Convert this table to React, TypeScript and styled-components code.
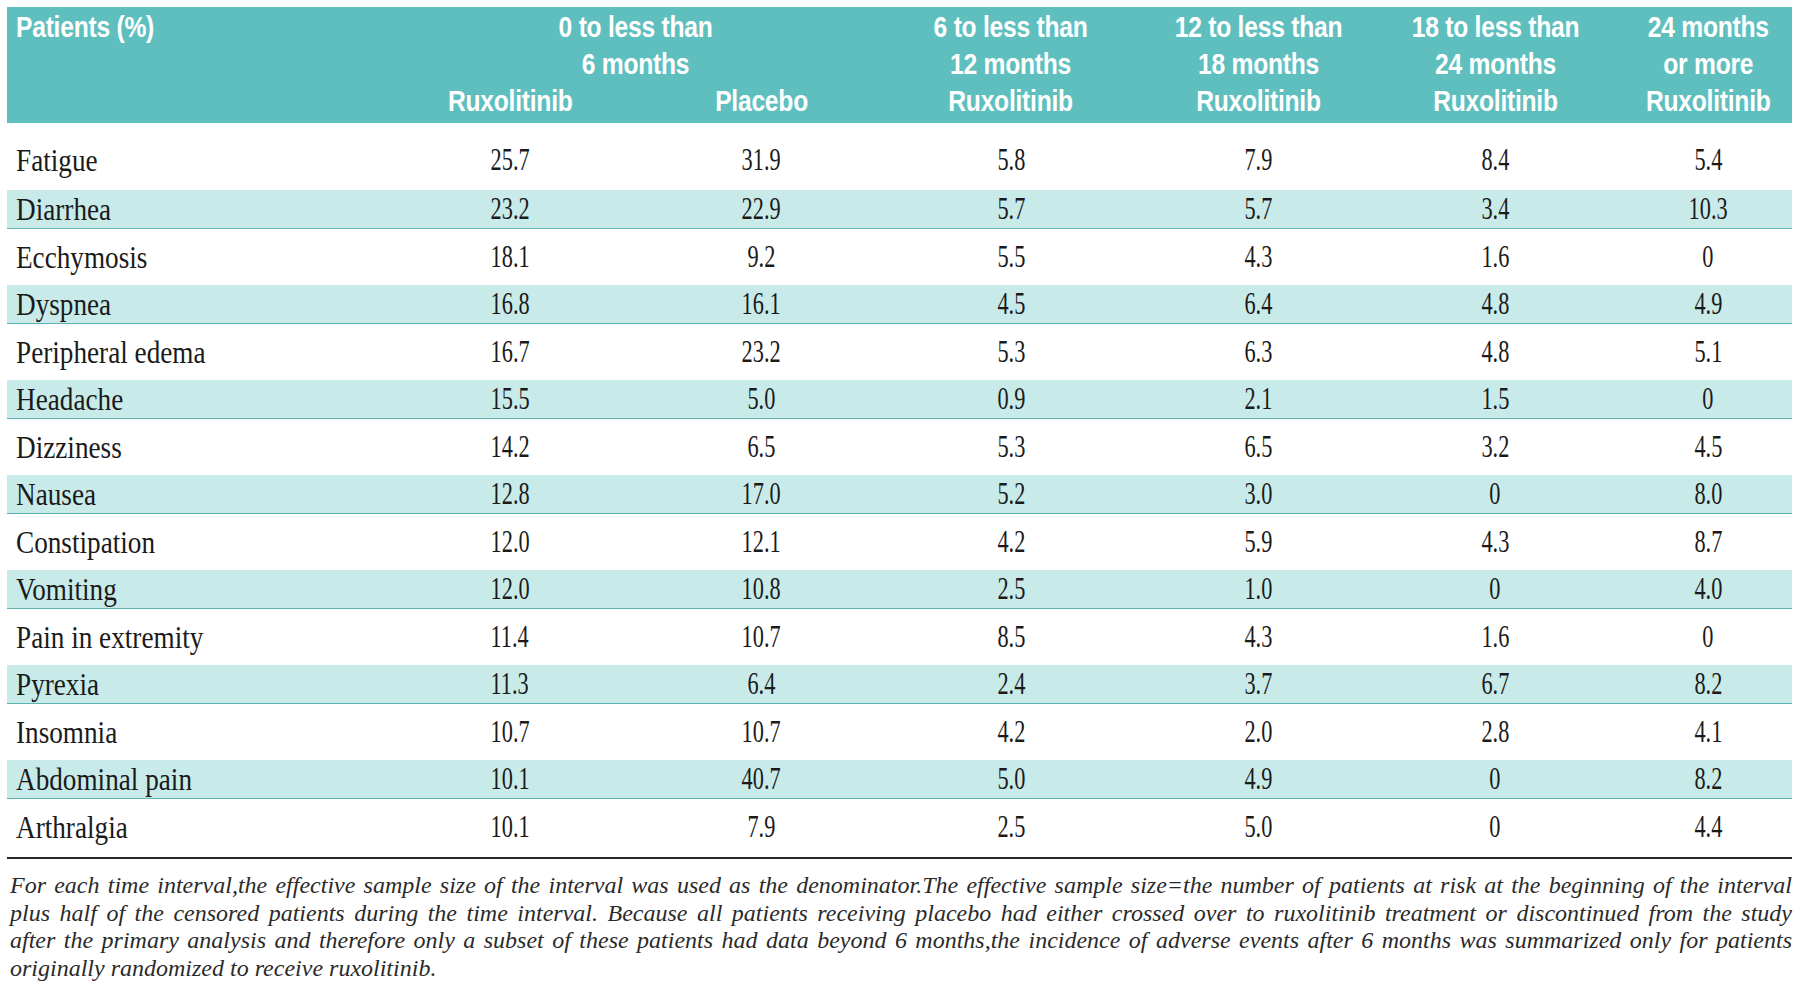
import React from 'react';
import styled, { createGlobalStyle } from 'styled-components';

const GlobalStyle = createGlobalStyle`
  html, body {
    margin: 0;
    padding: 0;
    background: #ffffff;
  }
  body {
    font-family: 'Liberation Serif', 'Times New Roman', serif;
    color: #1a1a1a;
  }
`;

const columns = '377px 252px 251px 248px 246px 228px 183px';

interface RowData {
  label: string;
  values: string[];
}

const rows: RowData[] = [
  { label: 'Fatigue', values: ['25.7', '31.9', '5.8', '7.9', '8.4', '5.4'] },
  { label: 'Diarrhea', values: ['23.2', '22.9', '5.7', '5.7', '3.4', '10.3'] },
  { label: 'Ecchymosis', values: ['18.1', '9.2', '5.5', '4.3', '1.6', '0'] },
  { label: 'Dyspnea', values: ['16.8', '16.1', '4.5', '6.4', '4.8', '4.9'] },
  { label: 'Peripheral edema', values: ['16.7', '23.2', '5.3', '6.3', '4.8', '5.1'] },
  { label: 'Headache', values: ['15.5', '5.0', '0.9', '2.1', '1.5', '0'] },
  { label: 'Dizziness', values: ['14.2', '6.5', '5.3', '6.5', '3.2', '4.5'] },
  { label: 'Nausea', values: ['12.8', '17.0', '5.2', '3.0', '0', '8.0'] },
  { label: 'Constipation', values: ['12.0', '12.1', '4.2', '5.9', '4.3', '8.7'] },
  { label: 'Vomiting', values: ['12.0', '10.8', '2.5', '1.0', '0', '4.0'] },
  { label: 'Pain in extremity', values: ['11.4', '10.7', '8.5', '4.3', '1.6', '0'] },
  { label: 'Pyrexia', values: ['11.3', '6.4', '2.4', '3.7', '6.7', '8.2'] },
  { label: 'Insomnia', values: ['10.7', '10.7', '4.2', '2.0', '2.8', '4.1'] },
  { label: 'Abdominal pain', values: ['10.1', '40.7', '5.0', '4.9', '0', '8.2'] },
  { label: 'Arthralgia', values: ['10.1', '7.9', '2.5', '5.0', '0', '4.4'] },
];

const footnoteLines = [
  'For each time interval,the effective sample size of the interval was used as the denominator.The effective sample size=the number of patients at risk at the beginning of the interval',
  'plus half of the censored patients during the time interval. Because all patients receiving placebo had either crossed over to ruxolitinib treatment or discontinued from the study',
  'after the primary analysis and therefore only a subset of these patients had data beyond 6 months,the incidence of adverse events after 6 months was summarized only for patients',
  'originally randomized to receive ruxolitinib.',
];

const Page = styled.div`
  width: 1785px;
  padding: 7px 0 0 7px;
`;

const Header = styled.div`
  display: grid;
  grid-template-columns: ${columns};
  grid-template-rows: 37px 37px 37px;
  background: #5fbfbe;
  color: #ffffff;
  padding: 2px 0 3px;
  font-family: 'Liberation Sans', Arial, sans-serif;
  font-weight: 700;
  font-size: 29px;
  line-height: 37px;
`;

const HeadCell = styled.div<{ $col: number; $row: number; $span?: number; $rows?: number; $left?: boolean; $pad?: number }>`
  grid-column: ${({ $col, $span }) => `${$col} / span ${$span ?? 1}`};
  grid-row: ${({ $row, $rows }) => `${$row} / span ${$rows ?? 1}`};
  text-align: ${({ $left }) => ($left ? 'left' : 'center')};
  padding-left: ${({ $pad }) => $pad ?? 0}px;
  white-space: nowrap;
`;

const HeadText = styled.span<{ $left?: boolean }>`
  display: inline-block;
  transform: scaleX(0.85);
  transform-origin: ${({ $left }) => ($left ? 'left center' : 'center center')};
  letter-spacing: -0.3px;
`;

const Body = styled.div`
  display: flex;
  flex-direction: column;
  padding-bottom: 2px;
  border-bottom: 2px solid #262626;
`;

const Row = styled.div<{ $shaded: boolean; $first: boolean }>`
  display: grid;
  grid-template-columns: ${columns};
  align-items: center;
  height: ${({ $shaded, $first }) => ($first ? 61 : $shaded ? 38 : 56)}px;
  padding-top: ${({ $first }) => ($first ? 6 : 0)}px;
  background: ${({ $shaded }) => ($shaded ? '#c8ebea' : 'transparent')};
  border-bottom: ${({ $shaded }) => ($shaded ? '1px solid #5fb3b2' : 'none')};
`;

const LabelCell = styled.div`
  padding-left: 9px;
  white-space: nowrap;
`;

const LabelText = styled.span`
  display: inline-block;
  font-size: 32px;
  line-height: 36px;
  transform: scaleX(0.85);
  transform-origin: left center;
`;

const ValueCell = styled.div<{ $pad?: number }>`
  text-align: center;
  padding-left: ${({ $pad }) => $pad ?? 0}px;
`;

const Num = styled.span`
  display: inline-block;
  font-size: 31px;
  line-height: 36px;
  transform: scaleX(0.72);
  transform-origin: center center;
`;

const Footnote = styled.div`
  margin-top: 13px;
  padding-left: 3px;
  font-family: 'Liberation Serif', 'Times New Roman', serif;
  font-style: italic;
  font-size: 24px;
  line-height: 27.7px;
  color: #2a2a2a;
`;

const FootLine = styled.div<{ $last: boolean }>`
  white-space: nowrap;
  text-align: ${({ $last }) => ($last ? 'left' : 'justify')};
  text-align-last: ${({ $last }) => ($last ? 'left' : 'justify')};
`;

const subHeads = [
  { col: 4, lines: ['6 to less than', '12 months', 'Ruxolitinib'] },
  { col: 5, lines: ['12 to less than', '18 months', 'Ruxolitinib'] },
  { col: 6, lines: ['18 to less than', '24 months', 'Ruxolitinib'] },
  { col: 7, lines: ['24 months', 'or more', 'Ruxolitinib'], pad: 15 },
];

export default function App() {
  return (
    <Page>
      <GlobalStyle />
      <Header>
        <HeadCell $col={1} $row={1} $left $pad={9}>
          <HeadText $left>Patients (%)</HeadText>
        </HeadCell>
        <HeadCell $col={2} $row={1} $span={2} $rows={2}>
          <HeadText>
            0 to less than
            <br />6 months
          </HeadText>
        </HeadCell>
        <HeadCell $col={2} $row={3}>
          <HeadText>Ruxolitinib</HeadText>
        </HeadCell>
        <HeadCell $col={3} $row={3}>
          <HeadText>Placebo</HeadText>
        </HeadCell>
        {subHeads.map((h) => (
          <HeadCell key={h.col} $col={h.col} $row={1} $rows={3} $pad={h.pad}>
            <HeadText>
              {h.lines[0]}
              <br />
              {h.lines[1]}
              <br />
              {h.lines[2]}
            </HeadText>
          </HeadCell>
        ))}
      </Header>
      <Body>
        {rows.map((r, i) => (
          <Row key={r.label} $shaded={i % 2 === 1} $first={i === 0}>
            <LabelCell>
              <LabelText>{r.label}</LabelText>
            </LabelCell>
            {r.values.map((v, j) => (
              <ValueCell key={j} $pad={j === 5 ? 15 : 0}>
                <Num>{v}</Num>
              </ValueCell>
            ))}
          </Row>
        ))}
      </Body>
      <Footnote>
        {footnoteLines.map((line, i) => (
          <FootLine key={i} $last={i === footnoteLines.length - 1}>
            {line}
          </FootLine>
        ))}
      </Footnote>
    </Page>
  );
}
